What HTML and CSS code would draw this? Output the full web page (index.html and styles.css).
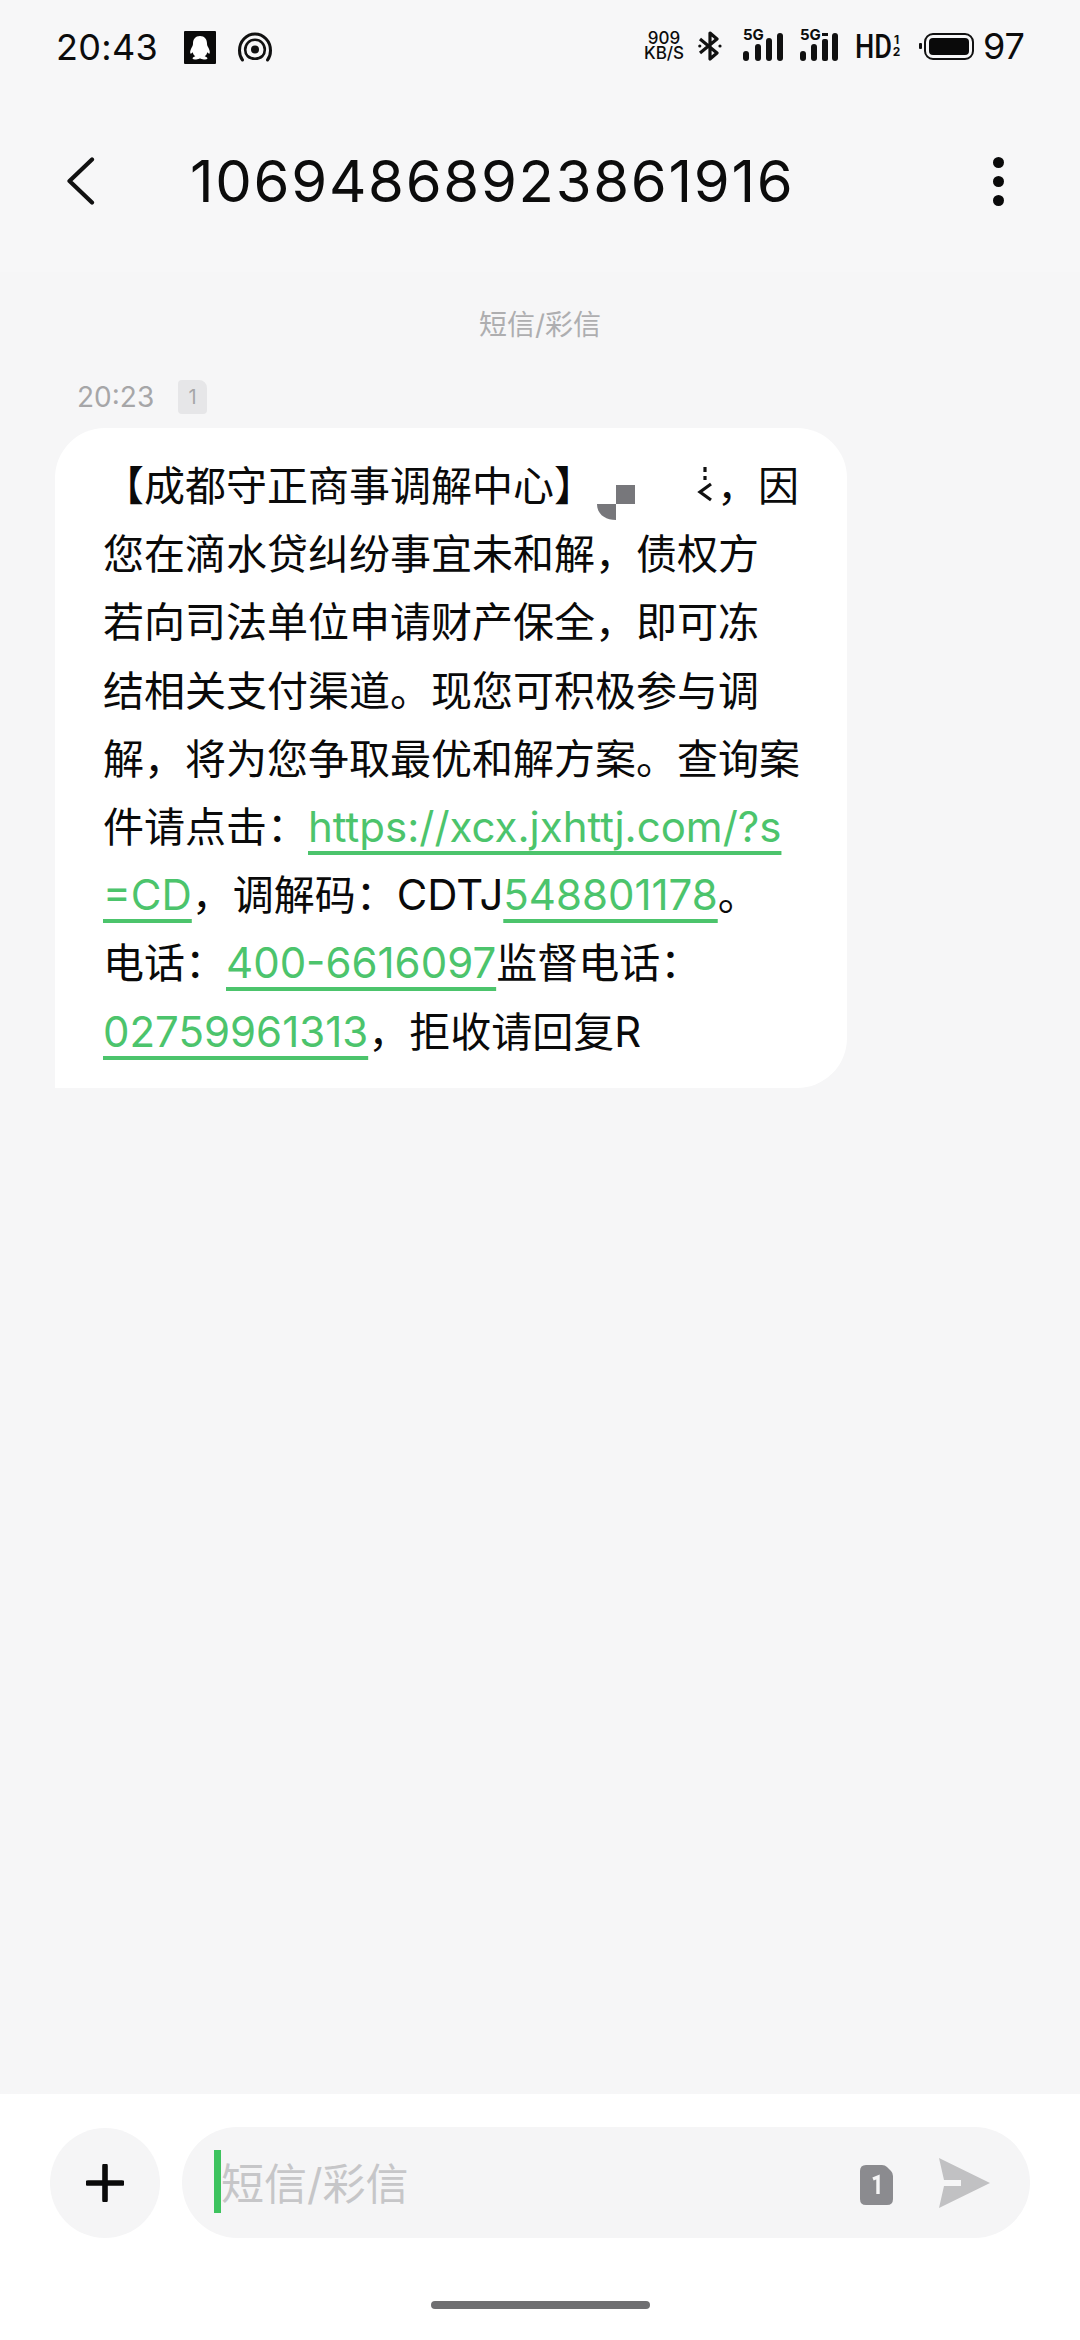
FILE: index.html
```html
<!DOCTYPE html>
<html lang="zh-CN">
<head>
<meta charset="utf-8">
<title>短信</title>
<link rel="stylesheet" href="styles.css">
</head>
<body>
<div class="screen">
  <header class="status">
    <div class="status-left">
      <span class="status-time">20:43</span>
      <svg class="ic-qq" viewBox="0 0 32 33" width="32" height="33"><rect width="32" height="33" rx="1" fill="#0a0a0a"/><path d="M16 5c-4.600 0-7 3.400-7 7.500 0 1-.2 2-.9 3.300-1.300 2.300-2.300 4.700-1.800 6.400.4 1 1.400.2 2.400-1 .4 1.800 1.400 3.200 2.600 4.100-1.700.5-2.700 1.200-2.700 2.200 0 .8 1.700 1 3.500 1 1.600 0 3.200-.6 3.900-1.200.7.600 2.300 1.200 3.900 1.200 1.800 0 3.500-.2 3.500-1 0-1-1-1.700-2.700-2.200 1.200-.9 2.200-2.300 2.600-4.100 1 1.200 2 2 2.400 1 .5-1.700-.5-4.100-1.800-6.400-.7-1.300-.9-2.300-.9-3.300C23 8.400 20.600 5 16 5z" fill="#fff"/></svg>
      <svg class="ic-ring" viewBox="0 0 34 30" width="34" height="30"><path d="M4.500 28C2.500 25.500 1.500 22.300 1.500 18.500 1.500 9 8.500 2 17 2s15.500 7 15.500 16.500c0 3.800-1 7-3 9.500" fill="none" stroke="#111" stroke-width="3" stroke-linecap="round"/><path d="M9.500 24C8 22.300 7.200 20.300 7.200 17.800 7.200 12 11.500 7.800 17 7.800S26.800 12 26.800 17.800c0 2.500-.8 4.500-2.300 6.200-1.800 1.700-4.500 2.800-7.500 2.800s-5.700-1.100-7.500-2.800z" fill="none" stroke="#111" stroke-width="2.600"/><circle cx="17" cy="17.500" r="4" fill="#111"/></svg>
    </div>
    <div class="status-right">
      <div class="netspeed"><span>909</span><span>KB/S</span></div>
      <svg class="ic-bt" viewBox="0 0 24 30" width="24" height="30"><path d="M2 8l17 14-7 6V2l7 6L2 22" fill="none" stroke="#111" stroke-width="3.200" stroke-linejoin="round"/><circle cx="1.800" cy="15" r="1.600" fill="#111"/><circle cx="22" cy="15" r="1.600" fill="#111"/></svg>
      <div class="sim">
        <span class="sim-tag">5G</span>
        <svg viewBox="0 0 42 28" width="42" height="28"><g fill="#111"><rect x="0" y="18" width="6" height="10" rx="3"/><rect x="12" y="11" width="6" height="17" rx="3"/><rect x="23" y="5" width="6" height="23" rx="3"/><rect x="34" y="0" width="6" height="28" rx="3"/></g></svg>
      </div>
      <div class="sim">
        <span class="sim-tag">5G</span>
        <svg viewBox="0 0 40 28" width="40" height="28"><g fill="#111"><rect x="0" y="18" width="6" height="10" rx="3"/><rect x="11" y="11" width="6" height="17" rx="3"/><rect x="22" y="0" width="6" height="3"/><rect x="22" y="6" width="6" height="22" rx="2"/><rect x="32" y="0" width="6" height="28" rx="3"/></g></svg>
      </div>
      <div class="hd"><span class="hd-main">HD</span><span class="hd-frac"><span>1</span><span>2</span></span></div>
      <div class="battery"><span class="batt-nub"></span><span class="batt-body"><span class="batt-fill"></span></span></div>
      <span class="status-pct">97</span>
    </div>
  </header>

  <nav class="topbar">
    <svg class="ic-back" viewBox="0 0 28 48" width="28" height="48"><path d="M25 2.500 2.500 24 25 45.500" fill="none" stroke="#111" stroke-width="4.200" stroke-linecap="round" stroke-linejoin="round"/></svg>
    <h1 class="title">10694868923861916</h1>
    <div class="more"><i></i><i></i><i></i></div>
  </nav>

  <main class="thread">
    <div class="channel">短信/彩信</div>
    <div class="meta"><span class="meta-time">20:23</span><span class="meta-sim">1</span></div>
    <div class="bubble">【成都守正商事调解中心】<svg class="redact" viewBox="0 0 122 66" width="122" height="66"><rect x="21" y="32" width="19" height="19" fill="#77777b"/><path d="M2 51h19v16C10 67 2 61 2 51z" fill="#77777b"/><path d="M110 14v5M110 23v4M116 31l-11 8 11 8" fill="none" stroke="#111" stroke-width="3.200"/></svg>，因<br>您在滴水贷纠纷事宜未和解，债权方<br>若向司法单位申请财产保全，即可冻<br>结相关支付渠道。现您可积极参与调<br>解，将为您争取最优和解方案。查询案<br>件请点击：<a class="link">https://xcx.jxhttj.com/?s</a><br><a class="link">=CD</a>，调解码：<span class="latin">CDTJ</span><a class="link">548801178</a>。<br>电话：<a class="link">400-6616097</a>监督电话：<br><a class="link">02759961313</a>，拒收请回复<span class="latin">R</span></div>
  </main>

  <footer class="composer">
    <div class="composer-row">
      <button class="plus"><svg viewBox="0 0 38 38" width="38" height="38"><path d="M19 2v34M2 19h34" stroke="#0a0a0a" stroke-width="5.600" stroke-linecap="round"/></svg></button>
      <div class="input">
        <span class="caret"></span>
        <span class="placeholder">短信/彩信</span>
        <svg class="ic-sim" viewBox="0 0 33 40" width="33" height="40"><path d="M6 0h16q3 0 5 2l4 4q2 2 2 5v23q0 6-6 6H6q-6 0-6-6V6q0-6 6-6z" fill="#8b8b8f"/><path d="M13 14l5-2v17" fill="none" stroke="#f5f5f6" stroke-width="3.400"/></svg>
        <svg class="ic-send" viewBox="0 0 52 50" width="52" height="50"><path d="M1 0l51 25L1 50l5-22h17v-6H6z" fill="#c1c1c3"/></svg>
      </div>
    </div>
    <div class="home-bar"></div>
  </footer>
</div>
</body>
</html>
```

FILE: styles.css
```css
* { box-sizing: border-box; }
html, body { margin: 0; padding: 0; }
body {
  width: 1080px;
  height: 2340px;
  overflow: hidden;
  font-family: Inter, "Noto Sans CJK SC", sans-serif;
  background: #f6f6f7;
  color: #0c0c0c;
}
.screen { display: flex; flex-direction: column; height: 2340px; }

.status {
  height: 90px;
  padding: 29px 55px 0 56px;
  display: flex;
  justify-content: space-between;
  align-items: flex-start;
  background: #f7f7f8;
}
.status-left { display: flex; align-items: center; gap: 26px; }
.status-time { font-size: 36px; line-height: 36px; letter-spacing: .3px; }
.ic-ring { margin-left: -4px; }
.status-right { display: flex; align-items: center; height: 34px; }
.netspeed {
  display: flex; flex-direction: column; align-items: center;
  font-size: 17px; line-height: 15px; font-weight: 500;
  width: 44px; margin-right: 12px;
}
.ic-bt { margin-right: 21px; }
.sim { display: flex; flex-direction: column; width: 42px; position: relative; height: 30px; justify-content: flex-end; }
.sim + .sim { margin-left: 15px; }
.sim-tag {
  position: absolute; left: 0; top: -3px;
  font-size: 15px; line-height: 14px; font-weight: 700;
}
.hd { display: flex; align-items: center; margin-left: 13px; }
.hd-main { font-family: "Roboto", sans-serif; font-size: 34px; line-height: 34px; font-weight: 500; transform: scaleX(.8); transform-origin: left; width: 37px; }
.hd-frac { display: flex; flex-direction: column; align-items: center; font-size: 12px; line-height: 12px; font-weight: 700; width: 9px; }
.battery { display: flex; align-items: center; margin-left: 18px; }
.batt-nub { width: 3px; height: 6px; background: #111; margin-right: 2px; border-radius: 1px; }
.batt-body {
  width: 50px; height: 27px; padding: 3px;
  border: 2.500px solid #111; border-radius: 9px;
  display: flex;
}
.batt-fill { flex: 1; background: #0a0a0a; border-radius: 4px; }
.status-pct { font-size: 36px; line-height: 36px; margin-left: 9px; }

.topbar {
  height: 182px;
  display: flex;
  align-items: center;
  padding: 0 76px 0 67px;
  background: #f7f7f8;
}
.title {
  margin: 0 0 0 95px;
  flex: 1;
  font-size: 58px;
  line-height: 64px;
  font-weight: 400;
  letter-spacing: 1.700px;
  white-space: nowrap;
}
.more { display: flex; flex-direction: column; gap: 8px; }
.more i { display: block; width: 11px; height: 11px; border-radius: 50%; background: #0a0a0a; }

.thread { flex: 1; padding: 33px 0 0 55px; display: flex; flex-direction: column; }
.channel {
  width: 970px; text-align: center;
  font-size: 28px; line-height: 40px; color: #aeaeb0;
}
.meta { display: flex; align-items: center; gap: 24px; margin-top: 34px; padding-left: 22px; height: 36px; }
.meta-time { font-size: 28px; line-height: 36px; color: #a6a6a8; }
.meta-sim {
  width: 29px; height: 34px; background: #e6e6e8; border-radius: 4px 8px 4px 4px;
  color: #a6a6a8; font-size: 20px; line-height: 34px; text-align: center;
}
.bubble {
  width: 792px;
  margin-top: 13px;
  padding: 24px 0 22px 48px;
  background: #fff;
  border-radius: 50px 50px 50px 0;
  font-size: 41px;
  line-height: 68.200px;
  white-space: nowrap;
  color: #0a0a0a;
  text-spacing-trim: space-all;
}
.latin { font-size: 41.800px; }
.link {
  font-size: 42px;
  color: #4cc46c;
  text-decoration: underline;
  text-decoration-thickness: 4px;
  text-underline-offset: 9px;
  text-decoration-skip-ink: none;
}
.redact { display: inline-block; vertical-align: -18px; overflow: visible; }

.composer { height: 246px; background: #fff; padding-top: 33px; display: flex; flex-direction: column; }
.composer-row { display: flex; align-items: center; padding: 0 50px; gap: 22px; }
.plus {
  width: 110px; height: 110px; border: 0; padding: 0; border-radius: 50%;
  background: #f5f5f6; display: flex; align-items: center; justify-content: center;
}
.input {
  flex: 1; height: 111px; border-radius: 56px; background: #f5f5f6;
  display: flex; align-items: center; padding: 0 40px 0 32px;
}
.caret { width: 7px; height: 63px; background: #3dc35e; margin-top: -2px; }
.placeholder { flex: 1; font-size: 43px; line-height: 56px; color: #c6c6c8; padding-top: 3px; }
.ic-sim { margin-right: 45px; margin-top: 4px; }
.home-bar { width: 219px; height: 8px; border-radius: 4px; background: #6f6f71; margin: 63px auto 0; }
```
